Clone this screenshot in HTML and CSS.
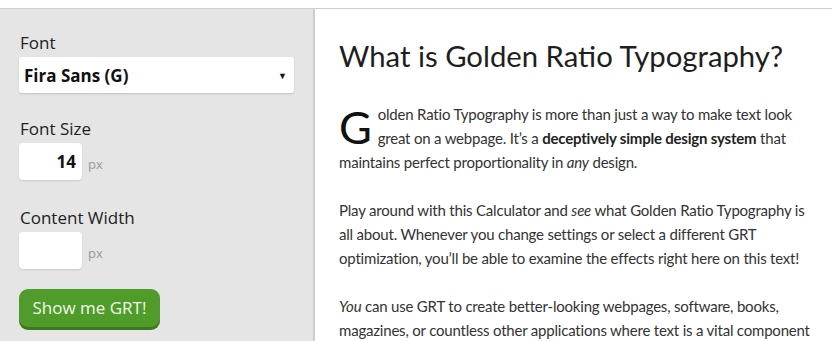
FILE: index.html
```html
<!DOCTYPE html>
<html>
<head>
  <title>Golden Ratio Typography Calculator</title>
  <link rel="stylesheet" href="styles.css">
</head>
<body>
  <div class="page">
    <div class="sidebar">
      <label class="field-label" for="font">Font</label>
      <div class="select-wrap">
        <select id="font" class="font-select">
          <option selected>Fira Sans (G)</option>
          <option>Georgia</option>
          <option>Helvetica</option>
        </select>
        <span class="select-arrow">&#9660;</span>
      </div>

      <label class="field-label" for="fontSize">Font Size</label>
      <div class="unit-row">
        <input type="text" id="fontSize" class="num-input" value="14">
        <span class="unit">px</span>
      </div>

      <label class="field-label" for="contentWidth">Content Width</label>
      <div class="unit-row">
        <input type="text" id="contentWidth" class="num-input" value="">
        <span class="unit">px</span>
      </div>

      <button class="grt-button">Show me GRT!</button>
    </div>

    <div class="content">
      <h1 class="heading">What is Golden Ratio Typography?</h1>
      <p><span class="dropcap">G</span>olden Ratio Typography is more than just a way to make text look great on a webpage. It&rsquo;s a <strong>deceptively simple design system</strong> that maintains perfect proportionality in <em>any</em> design.</p>
      <p>Play around with this Calculator and <em>see</em> what Golden Ratio Typography is all about. Whenever you change settings or select a different GRT optimization, you&rsquo;ll be able to examine the effects right here on this text!</p>
      <p><em>You</em> can use GRT to create better-looking webpages, software, books, magazines, or countless other applications where text is a vital component of the design.</p>
    </div>
  </div>
</body>
</html>
```

FILE: styles.css
```css
body {
  margin: 0;
  background-color: #fff;
  font-family: "Open Sans", "Noto Sans", sans-serif;
  overflow: hidden;
}
.page {
  display: flex;
  margin-top: 8px;
  border-top: 1px solid #cfcfcf;
  height: 340px;
}
.sidebar {
  width: 294px;
  padding: 22px 0 0 19px;
  background-color: #e5e5e5;
  border-right: 2px solid #cdcdcd;
  display: flex;
  flex-direction: column;
  align-items: flex-start;
}
.field-label {
  font-size: 17px;
  color: #222;
  padding-left: 1px;
  line-height: 24px;
  margin-bottom: 2px;
}
.select-wrap {
  position: relative;
  width: 275px;
  margin-bottom: 24px;
}
.font-select {
  appearance: none;
  -webkit-appearance: none;
  width: 100%;
  height: 36px;
  padding: 0 0 0 5px;
  border: none;
  border-radius: 3px;
  background-color: #fff;
  box-shadow: 0 1px 2px rgba(0, 0, 0, 0.15);
  font-family: "Open Sans", "Noto Sans", sans-serif;
  font-size: 17px;
  font-weight: bold;
  color: #111;
}
.select-arrow {
  position: absolute;
  right: 7px;
  top: 12px;
  font-size: 9px;
  color: #111;
  pointer-events: none;
}
.unit-row {
  display: flex;
  align-items: center;
  margin-bottom: 26px;
}
.num-input {
  width: 63px;
  height: 37px;
  box-sizing: border-box;
  padding: 0 6px 0 0;
  border: none;
  border-radius: 4px;
  background-color: #fff;
  box-shadow: 0 1px 2px rgba(0, 0, 0, 0.12);
  text-align: right;
  font-family: "Open Sans", "Noto Sans", sans-serif;
  font-size: 17px;
  font-weight: bold;
  color: #111;
}
.unit {
  margin: 4px 0 0 6px;
  font-size: 13px;
  color: #999;
}
.grt-button {
  margin-top: -6px;
  width: 141px;
  height: 38px;
  padding: 0 0 2px;
  border: none;
  border-radius: 9px;
  background-color: #4f9c2a;
  box-shadow: 0 3px 0 #3a7a1c;
  color: #f0fae8;
  font-family: "Open Sans", "Noto Sans", sans-serif;
  font-size: 17px;
  cursor: pointer;
}
.content {
  flex: 1;
  padding: 0 12px 0 24px;
  color: #333;
  font-family: Lato, "Open Sans", sans-serif;
  font-size: 15px;
  letter-spacing: -0.2px;
  line-height: 24px;
}
.heading {
  margin: 27px 0 26px;
  font-family: Lato, "Open Sans", sans-serif;
  font-size: 29.3px;
  font-weight: normal;
  letter-spacing: 0;
  line-height: 40px;
  color: #1e1e1e;
}
.content p {
  margin: 0 0 24px;
}
.dropcap {
  float: left;
  font-size: 45px;
  line-height: 42px;
  margin: 4px 6px 0 0;
  color: #111;
}
.content strong {
  color: #222;
}
```
